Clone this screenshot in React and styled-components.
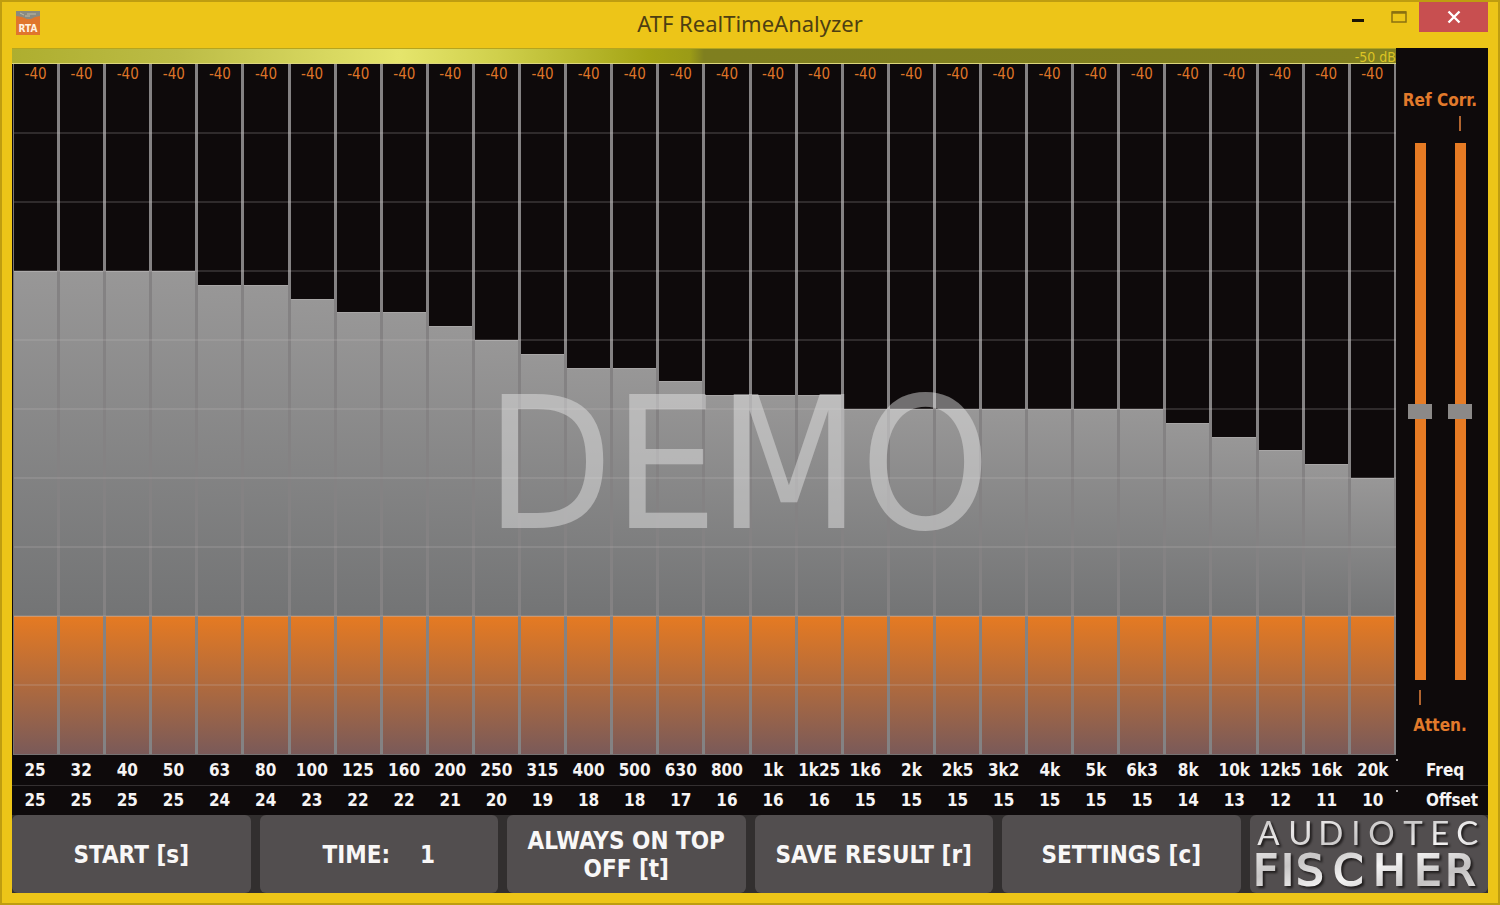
import React, { useState } from "react";
import styled, { createGlobalStyle } from "styled-components";

const UI_FONT = '"DejaVu Sans Condensed", "DejaVu Sans", sans-serif';
const TITLE_FONT = '"Noto Sans", "Open Sans", sans-serif';

const BANDS = [
  ["25", 25], ["32", 25], ["40", 25], ["50", 25], ["63", 24], ["80", 24],
  ["100", 23], ["125", 22], ["160", 22], ["200", 21], ["250", 20], ["315", 19],
  ["400", 18], ["500", 18], ["630", 17], ["800", 16], ["1k", 16], ["1k25", 16],
  ["1k6", 15], ["2k", 15], ["2k5", 15], ["3k2", 15], ["4k", 15], ["5k", 15],
  ["6k3", 15], ["8k", 14], ["10k", 13], ["12k5", 12], ["16k", 11], ["20k", 10],
].map(([freq, offset]) => ({ freq, offset, level: -40 }));

const GRID_LINES = [10, 20, 30, 40, 50, 60, 70, 80, 90];

const GlobalStyle = createGlobalStyle`
  *, *::before, *::after { box-sizing: border-box; }
  body { margin: 0; background: #edc518; }
`;

const Window = styled.div`
  display: flex;
  flex-direction: column;
  min-height: 100vh;
  padding: 0 10px 10px;
  background: #edc518;
  border: 2px solid #bf9d10;
  font-family: ${UI_FONT};
`;

const TitleBar = styled.header`
  position: relative;
  display: flex;
  align-items: flex-start;
  justify-content: space-between;
  height: 46px;
`;

const AppIcon = styled.svg`
  width: 24px;
  height: 24px;
  margin: 9px 0 0 4px;
`;

const Title = styled.h1`
  position: absolute;
  inset: 0;
  margin: 0;
  font: 400 22px/42px ${TITLE_FONT};
  text-align: center;
  color: #4d3f12;
  pointer-events: none;
`;

const WindowControls = styled.div`
  position: relative;
  display: flex;
`;

const ControlButton = styled.button`
  display: grid;
  place-items: center;
  width: ${(p) => (p.$close ? 69 : 41)}px;
  height: 30px;
  padding: 0;
  border: 0;
  background: ${(p) => (p.$close ? "#c84f50" : "transparent")};
`;

const Client = styled.main`
  flex: 1;
  display: flex;
  flex-direction: column;
  background: #0e0a0b;
`;

const Analyzer = styled.div`
  flex: 1;
  display: flex;
`;

const Spectrum = styled.section`
  flex: 1;
  min-width: 0;
  display: flex;
  flex-direction: column;
`;

const LevelMeter = styled.div`
  height: 16px;
  border-top: 1px solid #b5a51f;
  border-bottom: 1px solid #dcd67c;
  background: linear-gradient(
    90deg,
    #aeae2f 0%,
    #bcbc46 12%,
    #e5e56c 28%,
    #d0d04c 35%,
    #a4a414 46%,
    #9b9b16 49%,
    #7f7f1f 50%,
    #82801f 100%
  );
  font-size: 14px;
  line-height: 16px;
  text-align: right;
  color: #dcc424;
`;

const Plot = styled.div`
  position: relative;
  flex: 1;
  display: flex;
  min-height: 320px;
  margin-left: 1px;
  border: 1px solid #777374;
  border-width: 0 0 1px 1px;
`;

const Band = styled.div`
  position: relative;
  flex: 1 1 0;
  min-width: 0;
  display: flex;
  flex-direction: column;
  border-right: ${(p) => (p.$last ? 2 : 3)}px solid #848283;
`;

const Headroom = styled.div`
  font-size: 15px;
  line-height: 20px;
  text-align: center;
  color: #dd7428;
`;

const LevelBar = styled.div`
  border-top: 1px solid #a8a6a6;
  background: linear-gradient(#989797, #737475);
`;

const FloorBar = styled.div`
  height: 20%;
  border-top: 1px solid #d98d50;
  background: linear-gradient(#e57a22, #7a5a59);
`;

const GridLine = styled.div`
  position: absolute;
  left: 0;
  right: 0;
  height: 2px;
  margin-top: -1px;
  background: rgba(200, 195, 195, 0.18);
`;

const Watermark = styled.div`
  position: absolute;
  inset: 0;
  display: grid;
  place-items: center;
  padding: 110px 0 0 66px;
  font-size: 184px;
  line-height: 1;
  color: rgba(235, 235, 235, 0.45);
  pointer-events: none;
`;

const SidePanel = styled.aside`
  width: 92px;
  display: flex;
  flex-direction: column;
  align-items: center;
  padding: 42px 4px 20px 0;
  font-size: 17px;
  font-weight: 700;
  line-height: 20px;
  color: #e27a2b;
`;

const Sliders = styled.div`
  flex: 1;
  display: flex;
  gap: 16px;
`;

const SliderColumn = styled.label`
  display: flex;
  flex-direction: column;
  align-items: center;
  padding: 6px 0 10px;
`;

const Tick = styled.span`
  width: 2px;
  height: 15px;
  background: ${(p) => (p.$on ? "#b0642f" : "transparent")};
`;

const VerticalSlider = styled.input`
  flex: 1;
  width: 24px;
  min-height: 0;
  margin: 12px 0 10px;
  appearance: none;
  writing-mode: vertical-lr;
  direction: rtl;
  background: linear-gradient(#e67b24, #e67b24) center / 11px 100% no-repeat;

  &::-webkit-slider-thumb {
    appearance: none;
    width: 24px;
    height: 15px;
    background: #8b8988;
  }
`;

const BandTable = styled.table`
  width: 100%;
  table-layout: fixed;
  border-collapse: collapse;
  font-size: 17px;
  font-weight: 700;
  line-height: 28px;
  color: #f6f4f4;

  tr + tr {
    border-top: 1px solid #343031;
  }
`;

const BandCell = styled.td`
  height: 30px;
  padding: 0;
  text-align: center;
  white-space: nowrap;
`;

const RowLabel = styled.th`
  position: relative;
  width: 92px;
  padding: 0 0 0 30px;
  text-align: left;

  &::before {
    content: "";
    position: absolute;
    left: 0;
    top: 4px;
    width: 2px;
    height: 2px;
    background: #b5b2b2;
  }
`;

const CommandBar = styled.footer`
  display: grid;
  grid-template-columns: repeat(6, minmax(0, 1fr));
  gap: 9px;
  background: #322f2f;
`;

const CommandButton = styled.button`
  display: flex;
  align-items: center;
  justify-content: center;
  gap: 30px;
  height: 78px;
  padding: 2px 16px 0;
  border: 0;
  border-radius: 6px;
  background: #524e4f;
  font: 700 24px/28px ${UI_FONT};
  color: #f8f7f7;
`;

const Brand = styled.div`
  display: flex;
  height: 78px;
  border-radius: 6px;
  background: #524e4f;
`;

const BrandMark = styled.svg`
  width: 100%;
  height: 78px;
  overflow: visible;
  filter: drop-shadow(2px 2px 1px #1f1c1c);
`;

function RtaIcon() {
  return (
    <AppIcon viewBox="0 0 24 24" aria-hidden="true">
      <rect width="24" height="24" fill="#e0762c" />
      <path d="M0 0h24v5l-5 1-4 2-4 0-5-2-6-1z" fill="#8a8a80" />
      <path d="M4 2l4 2M11 3h9M9 5h5" stroke="#c0bba5" strokeWidth="1" />
      <text x="12" y="21" textAnchor="middle" fontFamily={UI_FONT} fontSize="10" fontWeight="700" fill="#fff3e2">
        RTA
      </text>
    </AppIcon>
  );
}

function BrandLogo() {
  return (
    <Brand>
      <BrandMark viewBox="0 0 238 78" role="img" aria-label="Audiotec Fischer">
        <defs>
          <linearGradient id="silver" x1="0" y1="0" x2="1" y2="1">
            <stop offset="0" stopColor="#b4b2b2" />
            <stop offset="0.2" stopColor="#e9e7e7" />
            <stop offset="0.4" stopColor="#c8c6c6" />
            <stop offset="0.6" stopColor="#f4f3f3" />
            <stop offset="0.8" stopColor="#c4c2c2" />
            <stop offset="1" stopColor="#eceaea" />
          </linearGradient>
        </defs>
        <text fill="url(#silver)">
          <tspan x="7 38 68 101 118 153 180 206" y="30" fontFamily="Lato, sans-serif" fontSize="33">
            AUDIOTEC
          </tspan>
          <tspan
            x="3 31 46 83 123 164 195"
            y="70"
            fontFamily="DejaVu Sans, sans-serif"
            fontSize="43"
            stroke="url(#silver)"
            strokeWidth="2"
          >
            FISCHER
          </tspan>
        </text>
      </BrandMark>
    </Brand>
  );
}

function Slider({ name, tickTop, tickBottom }) {
  const [value, setValue] = useState(50);
  return (
    <SliderColumn>
      <Tick $on={tickTop} />
      <VerticalSlider
        type="range"
        min="0"
        max="100"
        aria-label={name}
        value={value}
        onChange={(e) => setValue(Number(e.target.value))}
      />
      <Tick $on={tickBottom} />
    </SliderColumn>
  );
}

export default function App() {
  return (
    <>
      <GlobalStyle />
      <Window>
        <TitleBar>
          <RtaIcon />
          <Title>ATF RealTimeAnalyzer</Title>
          <WindowControls>
            <ControlButton aria-label="Minimize">
              <svg width="12" height="12" viewBox="0 0 12 12">
                <rect y="8" width="12" height="3" fill="#1c1605" />
              </svg>
            </ControlButton>
            <ControlButton aria-label="Maximize">
              <svg width="16" height="12" viewBox="0 0 16 12">
                <rect x="1" y="1" width="14" height="10" fill="none" stroke="#8a7010" strokeWidth="1.5" />
                <path d="M1 1.5h14" stroke="#8a7010" strokeWidth="2.5" />
              </svg>
            </ControlButton>
            <ControlButton $close aria-label="Close">
              <svg width="14" height="14" viewBox="0 0 14 14">
                <path d="M1.500 1.500l11 11M12.500 1.500l-11 11" stroke="#fff" strokeWidth="2.400" />
              </svg>
            </ControlButton>
          </WindowControls>
        </TitleBar>
        <Client>
          <Analyzer>
            <Spectrum>
              <LevelMeter>-50 dB</LevelMeter>
              <Plot>
                {BANDS.map((band, i) => (
                  <Band key={band.freq} $last={i === BANDS.length - 1}>
                    <Headroom style={{ height: `${80 - band.offset * 2}%` }}>{band.level}</Headroom>
                    <LevelBar style={{ height: `${band.offset * 2}%` }} />
                    <FloorBar />
                  </Band>
                ))}
                {GRID_LINES.map((top) => (
                  <GridLine key={top} style={{ top: `${top}%` }} />
                ))}
                <Watermark>DEMO</Watermark>
              </Plot>
            </Spectrum>
            <SidePanel>
              <span>Ref Corr.</span>
              <Sliders>
                <Slider name="Attenuation" tickBottom />
                <Slider name="Reference correction" tickTop />
              </Sliders>
              <span>Atten.</span>
            </SidePanel>
          </Analyzer>
          <BandTable>
            <tbody>
              <tr>
                {BANDS.map((b) => (
                  <BandCell key={b.freq}>{b.freq}</BandCell>
                ))}
                <RowLabel scope="row">Freq</RowLabel>
              </tr>
              <tr>
                {BANDS.map((b) => (
                  <BandCell key={b.freq}>{b.offset}</BandCell>
                ))}
                <RowLabel scope="row">Offset</RowLabel>
              </tr>
            </tbody>
          </BandTable>
          <CommandBar>
            <CommandButton>START [s]</CommandButton>
            <CommandButton>
              <span>TIME:</span>
              <span>1</span>
            </CommandButton>
            <CommandButton>ALWAYS ON TOP OFF [t]</CommandButton>
            <CommandButton>SAVE RESULT [r]</CommandButton>
            <CommandButton>SETTINGS [c]</CommandButton>
            <BrandLogo />
          </CommandBar>
        </Client>
      </Window>
    </>
  );
}
